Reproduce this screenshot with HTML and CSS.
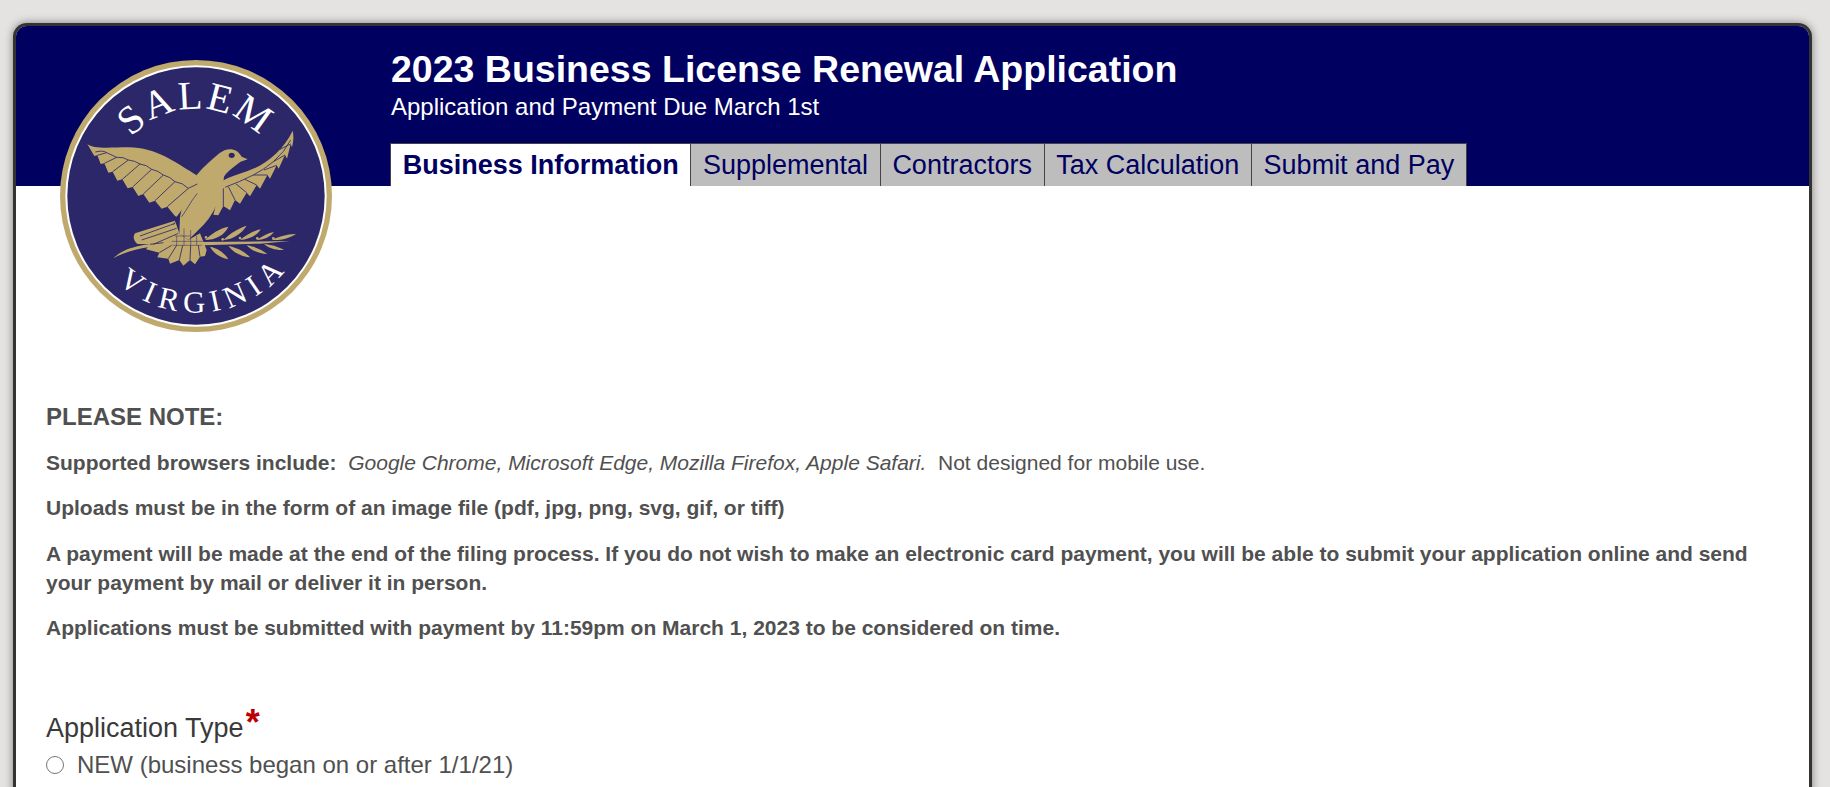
FILE: index.html
```html
<!DOCTYPE html>
<html lang="en">
<head>
<meta charset="utf-8">
<title>2023 Business License Renewal Application</title>
<link rel="stylesheet" href="styles.css">
</head>
<body>
<div class="card">
  <header class="banner">
    <svg class="seal" viewBox="0 0 840 840" aria-label="Salem Virginia seal">
      <circle cx="408" cy="408" r="408" fill="#bfa96c"/>
      <circle cx="408" cy="408" r="392" fill="#fff"/>
      <circle cx="408" cy="408" r="386" fill="#2b2768"/>
      <defs>
        <path id="arcTop" d="M146 408A262 262 0 0 1 670 408"/>
        <path id="arcBot" d="M58 408A350 350 0 0 0 758 408"/>
      </defs>
      <text class="seal-text"><textPath href="#arcTop" startOffset="50%" text-anchor="middle">SALEM</textPath></text>
      <text class="seal-text small"><textPath href="#arcBot" startOffset="53%" text-anchor="middle">VIRGINIA</textPath></text>
      <g fill="#bfa96c">
        <path d="M82 252C100 268 150 262 205 262C290 262 350 310 412 347L400 395L372 440L350 470L345 468L322 440L305 446L285 422L268 428L250 402L235 408L218 381L203 385L187 358L172 362L158 335L145 338L133 310L122 312L112 286L103 288Z"/>
        <path d="M698 212C670 270 620 312 570 330C540 342 510 350 488 362L460 464L475 466L490 438L510 451L525 420L540 431L560 398L570 409L590 375L600 386L622 345L630 356L650 316L656 326L675 285L681 296L692 252L696 262C700 245 702 230 698 212Z"/>
        <path d="M410 345C430 320 455 300 478 280C500 262 530 262 545 290L563 298L542 305C525 318 505 330 492 350C488 410 460 470 415 510L385 540L358 520L360 470C370 420 390 380 410 345Z"/>
        <path d="M225 520L345 482L358 520L385 540L420 520L440 570L435 588L420 590L405 613L390 600L370 617L358 600L330 611L325 596L292 592L298 578L258 568L270 553L232 552C220 540 218 530 225 520Z"/>
        <path d="M160 595C190 565 240 552 330 547L690 543L600 551L430 556L330 555C260 558 200 572 160 595Z"/>
        <path d="M435 540C455 520 480 505 505 500C495 525 465 540 435 540ZM490 540C510 520 535 505 560 497C545 520 520 538 490 540ZM540 540C560 525 580 512 602 508C590 528 565 538 540 540ZM590 540C605 530 625 518 642 516C630 532 610 540 590 540ZM635 540C650 532 690 520 708 522C690 535 660 542 635 540Z"/>
        <path d="M450 560C475 565 495 580 505 598C480 592 460 580 450 560ZM505 558C530 562 555 575 570 592C545 590 520 578 505 558ZM560 556C580 558 605 570 622 582C598 582 575 572 560 556ZM612 553C630 553 655 560 672 570C650 572 628 565 612 553Z"/>
        <circle cx="438" cy="532" r="4"/><circle cx="488" cy="538" r="4"/><circle cx="540" cy="534" r="4"/><circle cx="592" cy="535" r="4"/><circle cx="640" cy="535" r="4"/>
      </g>
      <g fill="none" stroke="#2b2768" stroke-width="2.5">
        <path d="M106 276Q130 270 140 278Q155 285 170 292Q190 290 205 300Q225 302 240 312Q262 315 275 328Q295 332 310 345Q330 350 345 365Q368 368 385 385L412 372"/>
        <path d="M322 440L385 385M285 422L345 365M250 402L310 345M218 381L275 328M187 358L240 312M158 335L205 300M133 310L170 292M112 286L140 278"/>
        <path d="M692 240Q675 275 640 305Q610 330 580 345Q540 365 495 382"/>
        <path d="M692 252L660 268M675 285L640 305M650 316L612 330M622 345L580 345M590 375L555 358M560 398L528 372M525 420L505 380M490 438L490 385"/>
        <path d="M345 490L240 528M350 505L245 540M355 520L280 553"/>
        <path d="M325 596L350 556M358 600L368 556M390 600L392 556M420 590L415 556M298 578L335 556M270 553L310 548"/>
        <path d="M335 544H428M338 556H425M350 528V556M372 505V556M392 510V556M410 528V556M345 528H392" stroke-width="1.5"/>
        <path d="M360 470C350 480 345 485 340 495M412 400C395 420 380 450 365 470" stroke-width="2"/>
      </g>
      <ellipse cx="515" cy="286" rx="9" ry="8" fill="#2b2768"/>
    </svg>
    <div class="banner-main">
      <h1 class="title">2023 Business License Renewal Application</h1>
      <p class="subtitle">Application and Payment Due March 1st</p>
      <nav class="tabs">
        <a class="tab active">Business Information</a>
        <a class="tab">Supplemental</a>
        <a class="tab">Contractors</a>
        <a class="tab">Tax Calculation</a>
        <a class="tab">Submit and Pay</a>
      </nav>
    </div>
  </header>
  <main class="content">
    <h2 class="note-head">PLEASE NOTE:</h2>
    <p class="note"><b>Supported browsers include:</b>&nbsp; <i>Google Chrome, Microsoft Edge, Mozilla Firefox, Apple Safari.</i>&nbsp; Not designed for mobile use.</p>
    <p class="note"><b>Uploads must be in the form of an image file (pdf, jpg, png, svg, gif, or tiff)</b></p>
    <p class="note"><b>A payment will be made at the end of the filing process. If you do not wish to make an electronic card payment, you will be able to submit your application online and send your payment by mail or deliver it in person.</b></p>
    <p class="note"><b>Applications must be submitted with payment by 11:59pm on March 1, 2023 to be considered on time.</b></p>
    <div class="field">
      <div class="field-label">Application Type<span class="req">*</span></div>
      <label class="radio"><input type="radio" name="apptype"> NEW (business began on or after 1/1/21)</label>
    </div>
  </main>
</div>
</body>
</html>
```
FILE: styles.css
```css
html, body { margin: 0; height: 100%; overflow: hidden; }
body {
  background: #e4e3e1;
  font-family: "Liberation Sans", Arial, sans-serif;
  color: #505050;
  padding: 23px 18px 0 13px;
  box-sizing: border-box;
}
.card {
  background: #fff;
  border: 3px solid #333;
  border-bottom: 0;
  border-radius: 14px 14px 0 0;
  box-shadow: 0 0 8px rgba(0,0,0,.45);
  height: 900px;
}
.banner {
  background: #000060;
  height: 160px;
  border-radius: 11px 11px 0 0;
  display: flex;
  position: relative;
}
.seal {
  position: absolute;
  left: 44px;
  top: 34px;
  width: 280px;
  height: 280px;
}
.banner-main {
  margin-left: 374px;
  display: flex;
  flex-direction: column;
}
.title {
  margin: 22px 0 0 1px;
  font-size: 37.5px;
  line-height: 42px;
  font-weight: 700;
  color: #fff;
}
.subtitle {
  margin: 4px 0 0 1px;
  font-size: 24px;
  line-height: 26px;
  color: #fff;
}
.tabs {
  display: flex;
  margin-top: 23px;
  height: 43px;
}
.tab {
  background: #bdbdbd;
  color: #000060;
  font-size: 27px;
  line-height: 42px;
  padding: 0 11.65px;
  border: 1px solid #444;
  border-bottom: 0;
  border-left: 0;
}
.tab.active {
  background: #fff;
  font-weight: 700;
  border-left: 1px solid #444;
}
.seal-text {
  font-family: "Liberation Serif", serif;
  font-size: 120px;
  letter-spacing: 6px;
  fill: #fff;
}
.seal-text.small { font-size: 92px; letter-spacing: 20px; }
.content { padding: 0 30px; }
.note-head {
  margin: 217px 0 0;
  font-size: 24px;
  line-height: 28px;
  font-weight: 700;
}
.note {
  margin: 16.5px 0 0;
  font-size: 21px;
  line-height: 29px;
}
.field { margin-top: 69px; }
.field-label { font-size: 27px; line-height: 34px; color: #3a3a3a; }
.req { color: #b00; font-size: 36px; line-height: 20px; font-weight: 700; margin-left: 2px; vertical-align: 2px; }
.radio { display: flex; align-items: center; gap: 13px; margin-top: 5px; font-size: 24px; line-height: 30px; }
.radio input { margin: 0; width: 18px; height: 18px; }
```
